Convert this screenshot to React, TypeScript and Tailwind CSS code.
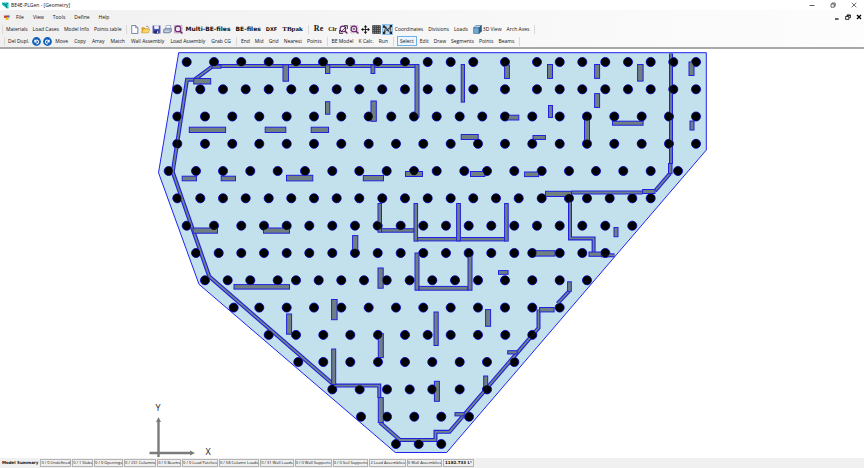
import clsx from "clsx";
import type { ReactNode } from "react";

// columns of the plan: one entry per row, [y, x positions]
const columnRows: [number, number[]][] = [
  [62, [186.7, 214, 241.3, 268.7, 296, 323, 350.3, 377.7, 405, 427.7, 450.7, 473.3, 505, 537, 559.7, 582.3, 605.3, 628, 650.7, 673.3, 696]],
  [89.3, [177.3, 200.3, 223, 245.7, 268.7, 291.3, 314, 336.7, 359.3, 382.3, 405, 427.7, 450.7, 473.3, 505, 537, 559.7, 582.3, 605.3, 628, 650.7, 673.3, 696]],
  [116.5, [177.3, 205, 232.3, 259.3, 286.7, 314, 341.3, 368.7, 391.3, 414, 436.7, 459.7, 482.3, 505, 532.3, 559.7, 587, 614.3, 641.7, 669, 696]],
  [143.8, [177.3, 205, 232.3, 259.3, 286.7, 314, 341.3, 368.7, 396, 423.3, 450.7, 478, 505, 532.3, 559.7, 587, 614.3, 641.7, 669, 696]],
  [171, [168.7, 196, 223, 250.3, 277.7, 305, 332.3, 359.3, 386.7, 414, 436.7, 464.3, 487, 514.3, 541.7, 569, 596, 623.3, 650.7, 678]],
  [198.3, [177.3, 200.3, 223, 245.7, 268.7, 291.3, 314, 336.7, 359.3, 382.3, 405, 427.7, 450.7, 473.3, 496, 518.7, 541.7, 569, 587, 609.7, 632.3, 650.7]],
  [225.7, [186.7, 214, 241.3, 264, 286.7, 309.3, 332.3, 355, 377.7, 400.7, 423.3, 446, 468.7, 491.3, 514.3, 537, 559.7, 582.3, 605.3, 632.3]],
  [253, [196, 218.7, 241.3, 264, 286.7, 309.3, 332.3, 355, 377.7, 400.7, 423.3, 446, 468.7, 491.3, 514.3, 532.3, 559.7, 582.3, 605.3]],
  [280.3, [205, 227.7, 250.3, 277.7, 296, 318.7, 341.3, 364, 386.7, 409.7, 432.3, 455, 478, 505, 532.3, 559.7, 587]],
  [307.6, [233.7, 259.3, 286.7, 314, 341.3, 368.7, 396, 423.3, 450.7, 478, 505, 532.3, 559.7]],
  [334.9, [268.7, 296, 323.3, 350.3, 378, 405, 427.7, 450.7, 478, 505.3, 532.3]],
  [362, [298.3, 323.3, 350.3, 378, 405, 432.3, 459.7, 487, 514.3]],
  [389.4, [332.3, 359.7, 387, 409.7, 432.3, 459.7, 487]],
  [416.7, [361, 387, 414.3, 441.3, 469]],
  [444, [396, 418.7, 441.3]],
];

// x, y, width, height
const walls = [
  [193.7, 78.5, 17, 5.5], [283, 64.7, 5.5, 16.5], [325.5, 65, 4.3, 8.5],
  [325.5, 101.7, 4.3, 12.5], [189.3, 127.2, 36.3, 5.3], [265.2, 127.2, 20.6, 5.3],
  [311.2, 127.2, 17.3, 5.3], [182.2, 176.2, 14.3, 4.6], [221.2, 176.2, 14.3, 4.6],
  [286.5, 175.3, 26.3, 5.6], [212, 65.2, 9, 3],
  [415, 64.5, 4, 52.5], [371, 65, 3.8, 8.5], [461.2, 64.5, 3.3, 37.6],
  [504.6, 65, 4.8, 13.5], [371, 101, 5.3, 20.3], [506, 115.2, 12.8, 4.8],
  [461.2, 134.5, 17, 5], [363.3, 175.5, 20.2, 5.3], [405.5, 171.5, 17, 5],
  [470.5, 171.5, 14.3, 5], [547.5, 64.5, 5, 13.9], [594.6, 64.5, 5, 13.9],
  [637.6, 64.5, 5.5, 16.6], [689, 62, 5, 13.5], [594.6, 93.6, 5, 13.9],
  [548.5, 105.5, 4, 12], [584.5, 117, 5, 25], [612.5, 121.2, 30.6, 4],
  [690, 121, 4, 9], [533, 135.5, 12.4, 4], [524.6, 172, 14, 4.6],
  [668.5, 163.5, 3.5, 10.2], [642.6, 189.5, 12.4, 4], [545.5, 191.3, 26, 5.2],
  [589, 252, 12.2, 4.3], [614, 227.5, 4, 9.2], [535, 250.7, 20, 5.4],
  [193, 228, 24.5, 5.2], [263.5, 228, 26, 5.2], [234, 284.6, 55.5, 4.5],
  [286.6, 314, 5, 20.2], [331.6, 299.5, 5.5, 20.2],
  [378, 203.5, 3.5, 28.7], [381.5, 228.7, 32.5, 3.5], [414, 203.5, 3.6, 37.6],
  [417.6, 237.5, 87, 3.4], [456.6, 203.5, 3.8, 37.4], [504.6, 203.5, 3.6, 37.6],
  [352.6, 235.6, 5.2, 16], [378, 268, 5.2, 20.2], [415, 253, 4, 37.2],
  [419, 286.4, 49, 3.8], [468, 254, 4, 36.2], [498.5, 270.6, 9.6, 3.7],
  [434, 312, 4.2, 33.5], [485.6, 309.6, 5, 16.7], [539.6, 307.5, 14.5, 4.4],
  [567.6, 281.8, 3.7, 9.5], [331.7, 349, 4, 35.5], [378.3, 333.6, 5, 24],
  [507.7, 350.7, 9.4, 3.3], [434.4, 381.3, 5, 20], [483.7, 376, 4, 12.6],
  [455, 412.6, 9.2, 3.3], [378.3, 397.6, 5, 25],
];

const wallLines = [
  "418,66 213,66 194.5,79.7 187,79.7 172.7,172 209.3,276.5 333,384",
  "334,385.6 379.3,385.6 379.3,398",
  "380,422.5 400,440 435.5,440 435.5,431.8 449.5,431.8 538.5,328 538.5,309.5",
  "557.5,303.5 569.3,291",
  "671,53.5 671,164",
  "670,173.5 655,191",
  "571.5,192.5 642.6,192.5",
  "570,197 570,238.4 593.6,238.4 593.6,252",
  "601,255.3 614.5,255.3",
];

const summary = [
  "0 / 0 Undefined",
  "0 / 1 Slabs",
  "0 / 0 Openings",
  "0 / 231 Columns",
  "0 / 0 Beams",
  "0 / 0 Load Patches",
  "0 / 58 Column Loads",
  "0 / 31 Wall Loads",
  "0 / 0 Wall Supports",
  "0 / 0 Soil Supports",
  "2 Load Assemblies",
  "0 Wall Assemblies",
];

const Icon = ({ children }: { children: ReactNode }) => (
  <svg viewBox="0 0 16 16" className="size-[9px] shrink-0" fill="none">
    {children}
  </svg>
);

const Tool = ({ label, className, children }: { label: string; className?: string; children?: ReactNode }) => (
  <button
    type="button"
    aria-label={label}
    className={clsx("flex shrink-0 items-center whitespace-nowrap", className)}
  >
    {children ?? label}
  </button>
);

const Grip = () => <span className="h-[9px] w-px shrink-0 bg-[#d9d9d9]" />;

const Magnifier = () => (
  <>
    <circle cx="7" cy="7" r="5" stroke="#6b2469" strokeWidth="2" />
    <path d="M10.5 10.5 15 15" stroke="#6b2469" strokeWidth="2.6" />
  </>
);

const TitleBar = () => (
  <header className="flex h-[10px] shrink-0 items-center justify-between bg-white pl-[2px] pr-[7px]">
    <div className="flex items-center gap-[2px]">
      <svg viewBox="0 0 16 16" className="size-[7px]">
        <path d="M0 1h15v14h-4L0 6z" fill="#18cfc4" />
        <path d="M2 3l6 3 5-3M8 6l3 7" stroke="#075e63" strokeWidth="2" fill="none" />
      </svg>
      <h1>BE4E-PLGen - [Geometry]</h1>
    </div>
    <div className="flex items-center gap-[15px]">
      <button type="button" aria-label="Minimize">
        <svg viewBox="0 0 6 6" className="size-[6px]"><path d="M.5 3.5h5" stroke="#333" strokeWidth=".8" /></svg>
      </button>
      <button type="button" aria-label="Restore">
        <svg viewBox="0 0 6 6" className="size-[6px]" fill="none" stroke="#333" strokeWidth=".7">
          <path d="M1 2h3.2v3.2H1zM2 2V1h3.2v3.2h-1" />
        </svg>
      </button>
      <button type="button" aria-label="Close">
        <svg viewBox="0 0 6 6" className="size-[6px]"><path d="M.7.7l4.6 4.6M5.3.7L.7 5.3" stroke="#333" strokeWidth=".7" /></svg>
      </button>
    </div>
  </header>
);

const MenuBar = () => (
  <div className="flex h-[13px] items-center justify-between pl-[4px] pr-[2px]">
    <nav className="flex items-center gap-[9px]">
      <svg viewBox="0 0 12 12" className="-mr-[3px] size-[6px]">
        <path d="M4 1h8v8H4z" fill="#d9e0ee" />
        <path d="M0 3h6v5H0z" fill="#c4472d" />
        <path d="M6 3h5v4H6z" fill="#3b66b5" />
        <path d="M3 7h6v5H3z" fill="#f0c02c" />
      </svg>
      {["File", "View", "Tools", "Define", "Help"].map((item) => (
        <button key={item} type="button">{item}</button>
      ))}
    </nav>
    <div className="flex items-center gap-[5px]">
      <button type="button" aria-label="Minimize drawing">
        <svg viewBox="0 0 6 6" className="size-[6px]"><path d="M1 5h3.6" stroke="#000" strokeWidth="1.2" /></svg>
      </button>
      <button type="button" aria-label="Restore drawing">
        <svg viewBox="0 0 6 6" className="size-[6px]" fill="none" stroke="#000" strokeWidth=".8">
          <path d="M.6 2.5h3.2v2.9H.6zM2 2.2V1h3.4v2.8H4M2 1.3h3.4" />
        </svg>
      </button>
      <button type="button" aria-label="Close drawing">
        <svg viewBox="0 0 6 6" className="size-[6px]"><path d="M1 1l4 4M5 1L1 5" stroke="#000" strokeWidth="1.3" /></svg>
      </button>
    </div>
  </div>
);

const MainTools = () => (
  <div className="flex h-[12px] items-center gap-[5px] pl-[2px]">
    <Grip />
    <div className="-ml-[2px] flex items-center gap-[5px]">
      <Tool label="Materials" />
      <Tool label="Load Cases" />
      <Tool label="Model Info" />
      <Tool label="Points table" />
    </div>
    <Grip />
    <div className="-ml-[2px] flex items-center gap-[2px]">
      <Tool label="New">
        <Icon>
          <path d="M3 1h7l4 4v10H3z" fill="#fff" stroke="#54698c" strokeWidth="1.4" />
          <path d="M10 1v4h4" stroke="#54698c" strokeWidth="1.2" />
        </Icon>
      </Tool>
      <Tool label="Open">
        <Icon>
          <path d="M1 14V4h5l1 2h6v8z" fill="#dca12c" />
          <path d="M1 14l3-7h12l-3 7z" fill="#fbd567" stroke="#b98219" strokeWidth=".8" />
          <path d="M9 3c3-2 4 0 5 2" stroke="#6d7280" strokeWidth="1.2" />
        </Icon>
      </Tool>
      <Tool label="Save">
        <Icon>
          <path d="M1 1h14v14H1z" fill="#4a52b8" />
          <path d="M4 1h8v6H4z" fill="#eef1fb" />
          <path d="M4 10h8v5H4z" fill="#20255e" />
          <path d="M9 11h2v3H9z" fill="#fff" />
        </Icon>
      </Tool>
      <Tool label="Print">
        <Icon>
          <path d="M6 1h8l-2 6H4z" fill="#fff" stroke="#68799a" />
          <path d="M1 8l3-2h11v5l-3 3H1z" fill="#9eadc5" stroke="#596a8a" />
          <path d="M3 11h8" stroke="#f5f7fa" strokeWidth="1.4" />
        </Icon>
      </Tool>
      <Tool label="Print preview">
        <Icon>
          <path d="M1 1h13v13H1z" fill="#eee4ef" stroke="#9b789b" />
          <Magnifier />
        </Icon>
      </Tool>
    </div>
    <div className="-ml-[3px] flex items-center gap-[5px]">
      <Tool label="Multi-BE-files" className="font-['DejaVu_Sans'] text-[6px] font-bold" />
      <Tool label="BE-files" className="font-['DejaVu_Sans'] text-[6px] font-bold" />
      <Tool label="DXF" className="font-['DejaVu_Sans'] font-bold" />
      <Tool label="TBpak" className="font-['Liberation_Serif'] text-[7px] font-bold" />
    </div>
    <Grip />
    <div className="flex items-center gap-[5px]">
      <Tool label="Re" className="font-['Liberation_Serif'] text-[8px] font-bold" />
      <Tool label="Clr" className="font-['Liberation_Serif'] text-[6px] font-bold" />
    </div>
    <div className="-ml-[3px] flex items-center gap-[2px]">
      <Tool label="Zoom extents">
        <Icon>
          <Magnifier />
          <path d="M3 13L13 3M9 1h6v6M1 9v6h6" stroke="#231525" strokeWidth="1.4" />
        </Icon>
      </Tool>
      <Tool label="Zoom window">
        <Icon>
          <path d="M1 1h13v13H1z" stroke="#ad86ab" strokeDasharray="2 1" />
          <Magnifier />
          <path d="M4.5 7h5M7 4.5v5" stroke="#6b2469" strokeWidth="1.4" />
        </Icon>
      </Tool>
      <Tool label="Pan">
        <Icon>
          <path d="M8 2v12M2 8h12" stroke="#111" strokeWidth="1.5" />
          <path d="M8 0l3 4H5zM8 16l3-4H5zM0 8l4-3v6zM16 8l-4-3v6z" fill="#111" />
        </Icon>
      </Tool>
      <Tool label="Grid">
        <Icon>
          <path d="M1 1h14v14H1z" fill="#888" />
          <path d="M1 1h14v14H1zM4.5 1v14M8 1v14M11.5 1v14M1 4.5h14M1 8h14M1 11.5h14" stroke="#333" strokeWidth="1.2" />
        </Icon>
      </Tool>
      <Tool label="Snap" className="bg-[#b9d9f2] outline outline-[#8dbfe8]">
        <Icon>
          <path d="M2 13L5 3l4 8 4-8 1 10M3 4l9 9M2 13l9-8" stroke="#222" strokeWidth="1.3" />
          <path d="M0 1h4v4H0zM12 0h4v4h-4zM0 12h4v4H0zM12 12h4v4h-4z" fill="#222" />
        </Icon>
      </Tool>
    </div>
    <div className="-ml-[2px] flex items-center gap-[5px]">
      <Tool label="Coordinates" />
      <Tool label="Divisions" />
      <Tool label="Loads" />
      <Tool label="3D View" className="gap-px">
        <Icon>
          <path d="M1 5l4-4h10l-4 4z" fill="#bddcf2" stroke="#365f83" />
          <path d="M1 5h10v10H1z" fill="#72a9d2" stroke="#365f83" />
          <path d="M11 5l4-4v10l-4 4z" fill="#315b7c" stroke="#244866" />
        </Icon>
        3D View
      </Tool>
      <Tool label="Arch Axes" />
    </div>
    <Grip />
  </div>
);

const EditTools = () => (
  <div className="flex h-[12px] items-center gap-[5px] pl-[4px]">
    <Grip />
    <Tool label="Del Dupl." className="-ml-[2px]" />
    <div className="-mx-[2px] flex items-center gap-[2px]">
      <Tool label="Undo">
        <Icon>
          <circle cx="8" cy="8" r="7.8" fill="#1261bd" />
          <path d="M5 5v4h4M5.5 8.5c2-5 7-3 6 1-.5 2-2 3-4 3" stroke="#fff" strokeWidth="1.8" />
        </Icon>
      </Tool>
      <Tool label="Redo">
        <Icon>
          <circle cx="8" cy="8" r="7.8" fill="#1261bd" />
          <path d="M11 5v4H7M10.5 8.5c-2-5-7-3-6 1 .5 2 2 3 4 3" stroke="#fff" strokeWidth="1.8" />
        </Icon>
      </Tool>
    </div>
    <div className="flex items-center gap-[6px]">
      {["Move", "Copy", "Array", "Match", "Wall Assembly", "Load Assembly", "Grab CG"].map((item) => (
        <Tool key={item} label={item} />
      ))}
    </div>
    <Grip />
    <div className="-ml-px flex items-center gap-[5px]">
      {["End", "Mid", "Grid", "Nearest", "Points"].map((item) => (
        <Tool key={item} label={item} />
      ))}
    </div>
    <Grip />
    <div className="-ml-px flex items-center gap-[5px]">
      {["BE Model", "K Calc.", "Run"].map((item) => (
        <Tool key={item} label={item} />
      ))}
    </div>
    <Grip />
    <Tool label="Select" className="-mx-[2px] h-[10px] border border-[#6fb1e6] bg-[#eef6fd] px-[2px]" />
    {["Edit", "Draw", "Segments", "Points", "Beams"].map((item) => (
      <Tool key={item} label={item} />
    ))}
    <Grip />
  </div>
);

const Drawing = () => (
  <svg viewBox="0 49 864 409" className="min-h-0 w-full flex-1 bg-white" role="img" aria-label="Slab geometry">
    <path
      d="M178.7 52.7H706.3V150L446.7 452.5H395.3L199 284.3L158.5 172.7Z"
      fill="#c2e1ec"
      stroke="#2222f0"
    />
    {columnRows.map(([y, xs]) =>
      xs.map((x) => (
        <circle key={`${x}-${y}`} cx={x} cy={y} r="4.5" fill="#000" stroke="#1818d8" />
      ))
    )}
    {wallLines.map((points) => (
      <g key={points} fill="none">
        <polyline points={points} stroke="#2020e0" strokeWidth="4" />
        <polyline points={points} stroke="#70828a" strokeWidth="1.8" />
      </g>
    ))}
    {walls.map(([x, y, width, height]) => (
      <rect key={`${x}-${y}`} x={x} y={y} width={width} height={height} fill="#708080" stroke="#2020e0" />
    ))}
    {/* columns show through the walls they carry */}
    {columnRows.map(([y, xs]) =>
      xs.map((x) => <circle key={`${x}-${y}`} cx={x} cy={y} r="4.2" fill="#000" fillOpacity=".9" />)
    )}
    <g stroke="#7b7b7b" strokeWidth="2.4">
      <path d="M158.5 457V421M149.5 453H191" />
      <path d="M158.5 417l2.5 5h-5zM195 453l-5-2.5v5z" fill="#7b7b7b" stroke="none" />
    </g>
    <g fill="#222" fontFamily="Open Sans, sans-serif" fontSize="9" textAnchor="middle">
      <text x="158" y="411">Y</text>
      <text x="208" y="455">X</text>
    </g>
  </svg>
);

const StatusBar = () => (
  <footer className="flex h-[10px] shrink-0 items-center gap-px bg-[#f0f0f0] pl-[2px] text-[4px] leading-[6px] whitespace-nowrap">
    <strong className="mr-px font-['DejaVu_Sans']">Model Summary</strong>
    {summary.map((item) => (
      <span key={item} className="border border-[#b4b4b4]">{item}</span>
    ))}
    <strong className="border border-[#b4b4b4] px-px font-['DejaVu_Sans']">1182.733 L³</strong>
  </footer>
);

export default function App() {
  return (
    <div className="flex h-screen flex-col overflow-hidden bg-white font-['Open_Sans',sans-serif] text-[5px] leading-[8px] text-[#111]">
      <TitleBar />
      <div className="h-[39px] shrink-0 border-b-2 border-[#a8a8a8] bg-linear-to-r from-[#f0f0f0] to-[#fdfdfd]">
        <MenuBar />
        <MainTools />
        <EditTools />
      </div>
      <Drawing />
      <StatusBar />
    </div>
  );
}
